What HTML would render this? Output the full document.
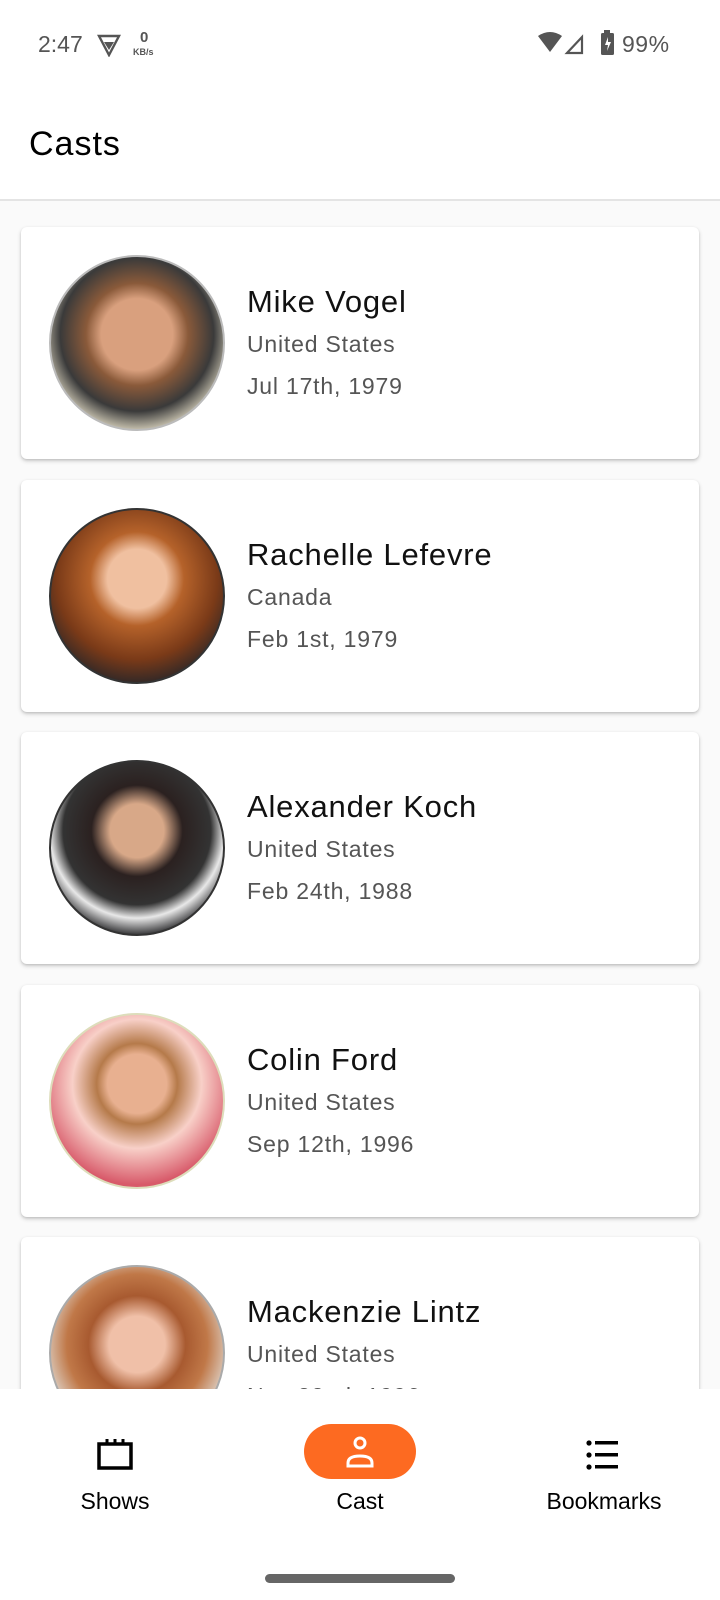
<!DOCTYPE html>
<html><head><meta charset="utf-8"><style>
*{margin:0;padding:0;box-sizing:border-box}
body{width:720px;height:1600px;background:#fff;font-family:"Liberation Sans",sans-serif;position:relative;overflow:hidden}
.abs{position:absolute}
.list{position:absolute;top:201px;left:0;width:720px;height:1188px;background:#fafafa;overflow:hidden}
.card{position:absolute;left:21px;width:678px;height:232px;background:#fff;border-radius:6px;box-shadow:0 2px 4px rgba(0,0,0,.18),0 1px 2px rgba(0,0,0,.1)}
.av{position:absolute;left:28px;top:28px;width:176px;height:176px;border-radius:50%;border:2px solid #333;overflow:hidden}
.name{position:absolute;left:226px;top:57px;font-size:31px;color:#111;letter-spacing:.8px}
.c{position:absolute;left:226px;top:104px;font-size:23px;color:#555;letter-spacing:.8px}
.d{position:absolute;left:226px;top:146px;font-size:23px;color:#555;letter-spacing:.8px}
.nav{position:absolute;top:1389px;left:0;width:720px;height:211px;background:#fff}
.lbl{position:absolute;top:1488px;font-size:23px;color:#000;transform:translateX(-50%)}
</style></head><body>
<div class="abs" style="left:38px;top:31px;font-size:23px;color:#555">2:47</div>
<svg class="abs" style="left:97px;top:33px" width="24" height="24" viewBox="0 0 24 24"><path d="M2 3h20L12 22z" fill="none" stroke="#555" stroke-width="2.4"/><path d="M7 9h10l-5 8z" fill="#555"/></svg>
<div class="abs" style="left:140px;top:29px;font-size:15px;color:#555;font-weight:bold">0</div>
<div class="abs" style="left:133px;top:47px;font-size:9px;color:#555;font-weight:bold">KB/s</div>
<svg class="abs" style="left:538px;top:32px" width="60" height="24" viewBox="0 0 60 24"><path d="M0 4Q12 -4 24 4L12 20z" fill="#555"/><path d="M29 21L44 5V21z" fill="none" stroke="#555" stroke-width="2.2"/></svg>
<svg class="abs" style="left:600px;top:30px" width="16" height="26" viewBox="0 0 16 26"><rect x="4" y="0" width="6" height="3" fill="#555"/><rect x="1" y="3" width="13" height="22" rx="1.5" fill="#555"/><path d="M8 7L5 15h3l-1 6 4-9H8z" fill="#fff"/></svg>
<div class="abs" style="left:622px;top:31px;font-size:23px;color:#555;letter-spacing:.5px">99%</div>
<div class="abs" style="left:29px;top:125px;font-size:34px;color:#000;letter-spacing:1px">Casts</div>
<div class="abs" style="left:0;top:199px;width:720px;height:2px;background:#e4e4e4"></div>
<div class="list">
<div class="card" style="top:26px"><div class="av" style="border-color:#bbb;background:radial-gradient(circle at 50% 45%,#d9a07e 0 28%,#8a5a3a 40%,#3a3a3a 60%,#c9c3b0 75%)"></div><div class="name">Mike Vogel</div><div class="c">United States</div><div class="d">Jul 17th, 1979</div></div>
<div class="card" style="top:279px"><div class="av" style="background:radial-gradient(circle at 50% 40%,#f0c0a0 0 22%,#b5622a 35%,#7a3a18 60%,#2a2628 80%)"></div><div class="name">Rachelle Lefevre</div><div class="c">Canada</div><div class="d">Feb 1st, 1979</div></div>
<div class="card" style="top:531px"><div class="av" style="background:radial-gradient(circle at 50% 40%,#d8a888 0 20%,#2b2120 34%,#333 55%,#e8e8e8 65%,#2e2e30 78%)"></div><div class="name">Alexander Koch</div><div class="c">United States</div><div class="d">Feb 24th, 1988</div></div>
<div class="card" style="top:784px"><div class="av" style="border-color:#ddb;background:radial-gradient(circle at 50% 40%,#e8b090 0 22%,#b57a4a 30%,#f8d0c8 48%,#d85a6a 75%)"></div><div class="name">Colin Ford</div><div class="c">United States</div><div class="d">Sep 12th, 1996</div></div>
<div class="card" style="top:1036px"><div class="av" style="border-color:#aaa;background:radial-gradient(circle at 50% 45%,#f0c0a8 0 22%,#a85a30 38%,#c07848 55%,#e0d8d0 75%)"></div><div class="name">Mackenzie Lintz</div><div class="c">United States</div><div class="d">Nov 22nd, 1996</div></div>
</div>
<div class="nav"></div>
<svg class="abs" style="left:97px;top:1438px" width="36" height="34" viewBox="0 0 36 34"><path d="M2 6h32v24H2z" fill="none" stroke="#000" stroke-width="3.5"/><path d="M10 1v6M18 1v6M26 1v6" stroke="#000" stroke-width="3"/></svg>
<div class="abs" style="left:304px;top:1424px;width:112px;height:55px;border-radius:28px;background:#fd6a21"></div>
<svg class="abs" style="left:344px;top:1434px" width="32" height="36" viewBox="0 0 32 36"><circle cx="16" cy="9" r="5" fill="none" stroke="#fff" stroke-width="3"/><path d="M4 32v-3q0-7 12-7t12 7v3z" fill="none" stroke="#fff" stroke-width="3"/></svg>
<svg class="abs" style="left:586px;top:1438px" width="36" height="34" viewBox="0 0 36 34"><g fill="#000"><circle cx="3" cy="5" r="2.6"/><circle cx="3" cy="17" r="2.6"/><circle cx="3" cy="29" r="2.6"/><rect x="9" y="3" width="23" height="3.5"/><rect x="9" y="15" width="23" height="3.5"/><rect x="9" y="27" width="23" height="3.5"/></g></svg>
<div class="lbl" style="left:115px">Shows</div>
<div class="lbl" style="left:360px">Cast</div>
<div class="lbl" style="left:604px">Bookmarks</div>
<div class="abs" style="left:265px;top:1574px;width:190px;height:9px;border-radius:5px;background:#666"></div>
</body></html>
